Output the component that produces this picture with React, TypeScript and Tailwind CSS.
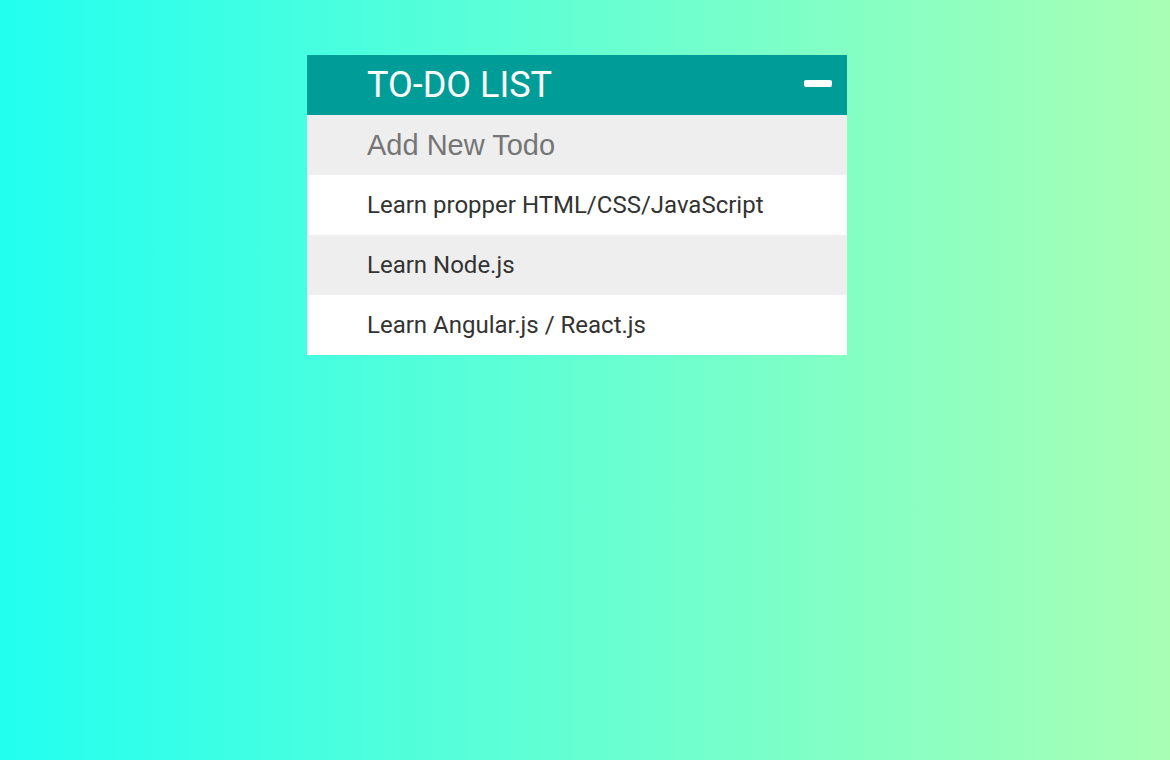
import React from "react";

const todos = [
  "Learn propper HTML/CSS/JavaScript",
  "Learn Node.js",
  "Learn Angular.js / React.js",
];

export default function App() {
  return (
    <div className="min-h-[760px] w-full bg-[linear-gradient(to_right,#22fff0,#a8ffb4)] pt-[55px] font-['Roboto',sans-serif]">
      <div className="ml-[307px] w-[540px]">
        <div className="flex h-[60px] items-center justify-between bg-[#009d98] pl-[60px] pr-[15px]">
          <h1 className="text-[36px] font-normal leading-none text-white">TO-DO LIST</h1>
          <div className="mb-[4px] h-[7px] w-[28px] rounded-[2px] bg-white" />
        </div>
        <div className="flex h-[60px] items-center bg-[#eeeeee] pl-[60px] pt-[2px]">
          <input
            className="w-full bg-transparent font-['Liberation_Sans',Arial,sans-serif] text-[29px] text-[#333] placeholder:text-[#757575] outline-none"
            placeholder="Add New Todo"
          />
        </div>
        <ul>
          {todos.map((t, i) => (
            <li
              key={t}
              className={`flex h-[60px] items-center pl-[60px] text-[24px] text-[#333] ${i % 2 === 1 ? "bg-[#eeeeee]" : "bg-white"}`}
            >
              {t}
            </li>
          ))}
        </ul>
      </div>
    </div>
  );
}
